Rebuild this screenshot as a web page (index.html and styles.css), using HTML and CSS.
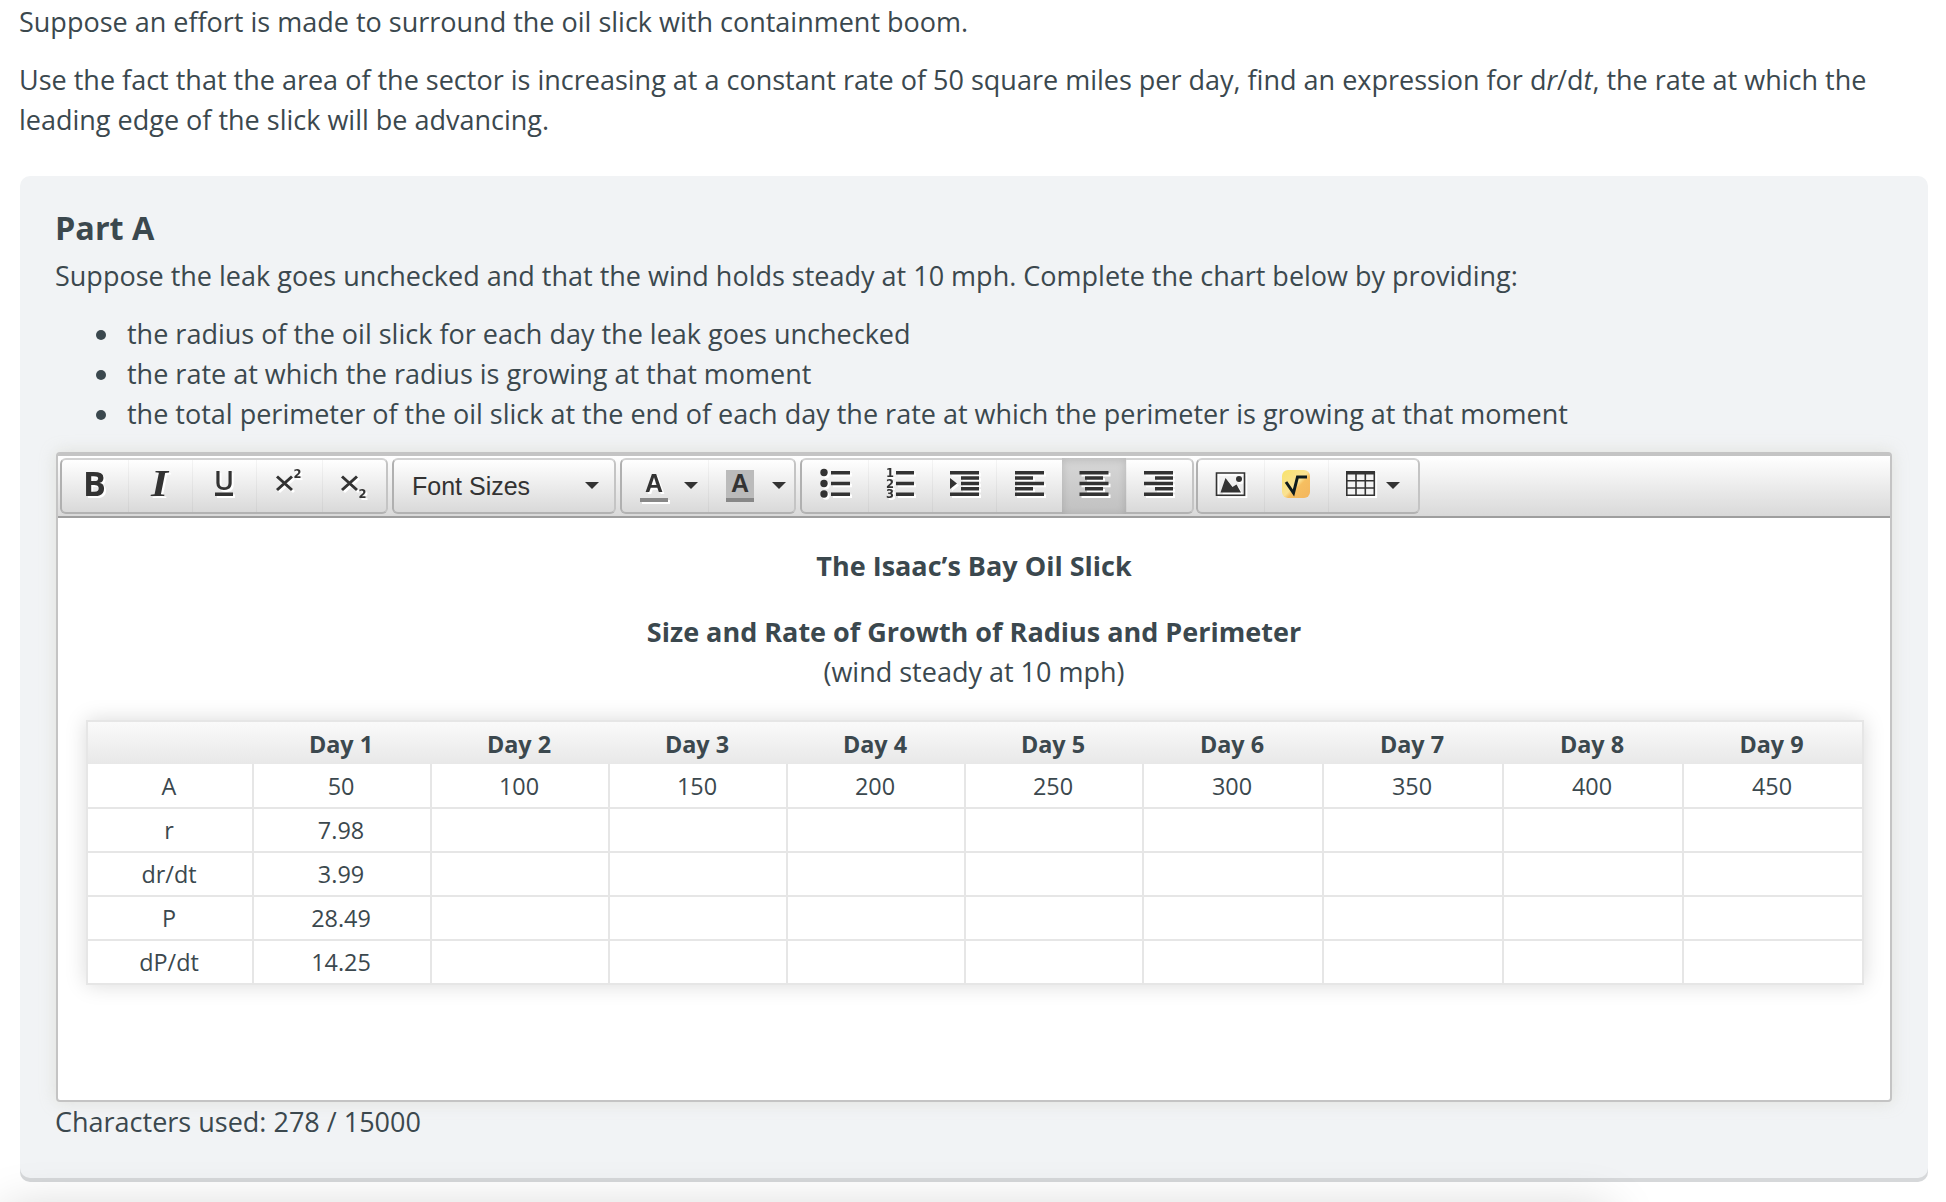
FILE: index.html
```html
<!DOCTYPE html>
<html lang="en">
<head>
    <meta charset="UTF-8">
    <title>Oil Slick - Part A</title>
    <link rel="stylesheet" href="styles.css">
</head>
<body>
    <div class="intro">
        <p>Suppose an effort is made to surround the oil slick with containment boom.</p>
        <p>Use the fact that the area of the sector is increasing at a constant rate of 50 square miles per day, find an expression for d<i>r</i>/d<i>t</i>, the rate at which the leading edge of the slick will be advancing.</p>
    </div>

    <div class="panel">
        <h2>Part A</h2>
        <p>Suppose the leak goes unchecked and that the wind holds steady at 10 mph. Complete the chart below by providing:</p>
        <ul>
            <li>the radius of the oil slick for each day the leak goes unchecked</li>
            <li>the rate at which the radius is growing at that moment</li>
            <li>the total perimeter of the oil slick at the end of each day the rate at which the perimeter is growing at that moment</li>
        </ul>

        <div class="editor">
            <div class="toolbar">
                <div class="group">
                    <div class="btn wide"><svg class="icon" viewBox="0 0 28 28"><text class="bold" x="2" y="26">B</text></svg></div>
                    <div class="btn"><svg class="icon" viewBox="0 0 28 28"><text class="italic" x="5" y="26" textLength="17" lengthAdjust="spacingAndGlyphs">I</text></svg></div>
                    <div class="btn"><svg class="icon" viewBox="0 0 28 28"><text class="under" x="14" y="20">U</text><path d="M5 22.500h18v3.500h-18z"/></svg></div>
                    <div class="btn wide"><svg class="icon" viewBox="0 0 28 28"><path class="line" d="M2 6.500L17 20M17 6.500L2 20"/><text class="tiny" x="18.500" y="8">2</text></svg></div>
                    <div class="btn"><svg class="icon" viewBox="0 0 28 28"><path class="line" d="M2 6.500L17 20M17 6.500L2 20"/><text class="tiny" x="18.500" y="28">2</text></svg></div>
                </div>
                <div class="group">
                    <div class="btn sizes"><span>Font Sizes</span><span class="caret"></span></div>
                </div>
                <div class="group">
                    <div class="btn color first"><svg class="icon" viewBox="0 0 28 28"><text class="letter" x="14" y="22">A</text><path class="swatch" d="M0 28h28v4H0z"/></svg><span class="caret"></span></div>
                    <div class="btn color"><svg class="icon flat" viewBox="0 0 28 28"><path class="mark" d="M0 0h28v28H0z"/><text class="letter" x="14" y="22">A</text><path class="swatch" d="M0 28h28v4H0z"/></svg><span class="caret"></span></div>
                </div>
                <div class="group">
                    <div class="btn wide"><svg class="icon" viewBox="0 0 28 28"><circle cx="3" cy="2.500" r="3.700"/><circle cx="3" cy="13.500" r="3.700"/><circle cx="3" cy="24" r="3.700"/><path d="M10 1h19v3.500H10zM10 11.700h19v3.500H10zM10 22.500h19v3.500H10z"/></svg></div>
                    <div class="btn"><svg class="icon" viewBox="0 0 28 28"><text class="tiny" x="0" y="7">1</text><text class="tiny" x="0" y="17.500">2</text><text class="tiny" x="0" y="28">3</text><path d="M10 1h18v3.500H10zM10 11.700h18v3.500H10zM10 22.500h18v3.500H10z"/></svg></div>
                    <div class="btn"><svg class="icon" viewBox="0 0 28 28"><path d="M0 1h29v3.500H0zM11 6.200h18v3.500H11zM11 11.700h18v3.500H11zM11 17h18v3.500H11zM0 22.500h29v3.500H0zM0 8l7 5.500L0 19z"/></svg></div>
                    <div class="btn wide"><svg class="icon" viewBox="0 0 28 28"><path d="M0 1h29v3.500H0zM0 6.200h18v3.500H0zM0 11.700h29v3.500H0zM0 17h18v3.500H0zM0 22.500h29v3.500H0z"/></svg></div>
                    <div class="btn active"><svg class="icon" viewBox="0 0 28 28"><path d="M-.5 1h29v3.500h-29zM5 6.200h18v3.500H5zM-.5 11.700h29v3.500h-29zM5 17h18v3.500H5zM-.5 22.500h29v3.500h-29z"/></svg></div>
                    <div class="btn wide"><svg class="icon" viewBox="0 0 28 28"><path d="M-1 1h29v3.500H-1zM10 6.200h18v3.500H10zM-1 11.700h29v3.500H-1zM10 17h18v3.500H10zM-1 22.500h29v3.500H-1z"/></svg></div>
                </div>
                <div class="group">
                    <div class="btn wide"><svg class="icon" viewBox="0 0 28 28"><path class="frame" d="M-.5 3h28v22.200h-28z"/><path d="M3.500 22.500L8.500 8l7 9 4-2.500 4.500 8z"/><circle cx="22" cy="9" r="3"/></svg></div>
                    <div class="btn"><svg class="icon flat" viewBox="0 0 28 28">
                        <defs>
                            <linearGradient id="gold" x1="0" y1="0" x2="1" y2="1">
                                <stop offset="0" stop-color="#f8e36c"/>
                                <stop offset=".5" stop-color="#fae293"/>
                                <stop offset=".6" stop-color="#f6bf60"/>
                                <stop offset="1" stop-color="#f3b55e"/>
                            </linearGradient>
                        </defs>
                        <rect width="28" height="28" rx="6" fill="url(#gold)"/>
                        <path class="root" d="M4 12l7.500 11L15.500 7H25"/>
                    </svg></div>
                    <div class="btn table-btn"><svg class="icon" viewBox="0 0 28 28"><path class="sheet" d="M0 1h29v25H0z"/><path d="M0 1h29v3.500H0z"/><path class="grid" d="M.8 2v23.200h27.500V2M10 3v22M19.300 3v22M0 10.800h29M0 18h29"/></svg><span class="caret"></span></div>
                </div>
            </div>

            <div class="content">
                <p><b>The Isaac’s Bay Oil Slick</b></p>
                <p class="subtitle"><b>Size and Rate of Growth of Radius and Perimeter</b><br>(wind steady at 10 mph)</p>
                <table>
                    <colgroup>
                        <col class="col-label">
                        <col span="5" class="col-day">
                        <col span="4" class="col-day-wide">
                    </colgroup>
                    <tr><th></th><th>Day 1</th><th>Day 2</th><th>Day 3</th><th>Day 4</th><th>Day 5</th><th>Day 6</th><th>Day 7</th><th>Day 8</th><th>Day 9</th></tr>
                    <tr><td>A</td><td>50</td><td>100</td><td>150</td><td>200</td><td>250</td><td>300</td><td>350</td><td>400</td><td>450</td></tr>
                    <tr><td>r</td><td>7.98</td><td></td><td></td><td></td><td></td><td></td><td></td><td></td><td></td></tr>
                    <tr><td>dr/dt</td><td>3.99</td><td></td><td></td><td></td><td></td><td></td><td></td><td></td><td></td></tr>
                    <tr><td>P</td><td>28.49</td><td></td><td></td><td></td><td></td><td></td><td></td><td></td><td></td></tr>
                    <tr><td>dP/dt</td><td>14.25</td><td></td><td></td><td></td><td></td><td></td><td></td><td></td><td></td></tr>
                </table>
            </div>
        </div>
        <div class="counter">Characters used: 278 / 15000</div>
    </div>

    <div class="footer-shade"></div>
</body>
</html>
```

FILE: styles.css
```css
* {
    box-sizing: border-box;
}
body {
    margin: 0;
    padding: 2px 18px 0 19px;
    height: 1202px;
    overflow: hidden;
    background: #fff;
    color: #3b484e;
    font-family: "Open Sans", "Noto Sans", sans-serif;
    font-size: 27px;
    line-height: 40px;
}
p {
    margin: 0 0 18px;
}
.intro {
    height: 174px;
}
.panel {
    margin-left: 1px;
    height: 1002px;
    padding: 32px 36px 0 35px;
    background: #f1f3f5;
    border-radius: 10px;
    box-shadow: 0 4px 0 #d6d8da;
}
.panel h2 {
    margin: 0;
    font-size: 32.4px;
    line-height: 39px;
    height: 48px;
}
.panel ul {
    margin: 0;
    padding: 0 0 0 72px;
    height: 138px;
    list-style: none;
}
.panel li::before {
    content: "";
    display: inline-block;
    width: 10px;
    height: 10px;
    margin: 0 21px 4px -31px;
    border-radius: 50%;
    background: #3b484e;
}

/* editor */
.editor {
    margin-left: 1px;
    height: 650px;
    border: 2px solid #c4c4c4;
    border-top-width: 4px;
    border-radius: 4px;
    background: #fff;
    box-shadow: 0 0 16px rgba(190, 190, 170, 0.35);
}
.toolbar {
    display: flex;
    gap: 4px;
    height: 62px;
    padding: 2px 2px 0;
    border-bottom: 2px solid #9e9e9e;
    background: linear-gradient(#fff, #d9d9d9);
}
.group {
    display: flex;
    height: 56px;
    border: 2px solid #c0c0c0;
    border-color: #d2d2d2 #c4c4c4 #b2b2b2 #b0b0b0;
    border-radius: 6px;
    background: linear-gradient(#fff, #d9d9d9);
}
.group:last-child {
    margin-left: -2px;
}
.btn {
    display: flex;
    justify-content: center;
    width: 64px;
    padding-top: 10px;
}
.btn + .btn {
    box-shadow: inset 1px 0 0 rgba(0, 0, 0, 0.04);
}
.btn.wide {
    width: 66px;
}
.btn.active {
    margin: -2px 0;
    padding-top: 12px;
    background: linear-gradient(#d8d8d8, #c0c0c0);
    box-shadow: inset 0 2px 8px rgba(0, 0, 0, 0.15);
}
.btn.sizes,
.btn.color,
.btn.table-btn {
    justify-content: space-between;
    padding-left: 18px;
    padding-right: 8px;
}
.btn.sizes {
    width: 220px;
    padding-right: 15px;
    color: #333;
    font-family: "Liberation Sans", Arial, sans-serif;
    font-size: 25px;
    line-height: 32px;
}
.btn.color {
    width: 86px;
}
.btn.color.first {
    padding-right: 10px;
}
.btn.table-btn {
    width: 90px;
    padding-right: 18px;
}
.caret {
    width: 0;
    height: 0;
    margin-top: 12px;
    border: 7px solid transparent;
    border-top-color: #333;
    border-bottom: 0;
}

/* toolbar icons */
.icon {
    width: 28px;
    height: 28px;
    overflow: visible;
    fill: #333;
    filter: drop-shadow(2px 2px 0 #fff);
}
.icon.flat {
    filter: none;
}
.icon text {
    font-family: "Open Sans", sans-serif;
}
.icon .bold {
    font-size: 34px;
    font-weight: 700;
}
.icon .italic {
    font: italic 700 37px "Liberation Serif", serif;
}
.icon .under {
    font-size: 27px;
    font-weight: 600;
    text-anchor: middle;
}
.icon .letter {
    font: 700 25px "Liberation Sans", sans-serif;
    text-anchor: middle;
}
.icon .tiny {
    font: 700 11.500px "DejaVu Sans", sans-serif;
}
.line,
.frame,
.grid,
.root {
    fill: none;
    stroke: #333;
    stroke-width: 3;
}
.frame,
.grid {
    stroke-width: 1.600;
}
.root {
    stroke: #0e1b1d;
}
.sheet {
    fill: #f4f4f4;
}
.mark {
    fill: #bbb;
}
.swatch {
    fill: #888;
}

/* editor content */
.content {
    padding: 28px 28px 0;
    text-align: center;
}
.content p {
    margin-bottom: 26px;
}
.content .subtitle {
    margin-bottom: 28px;
}
table {
    width: 1778px;
    table-layout: fixed;
    border-collapse: collapse;
    border: 2px solid #e6e6e6;
    box-shadow: 0 0 20px rgba(0, 0, 0, 0.15);
    font-size: 23.4px;
    line-height: 34px;
}
.col-label {
    width: 166px;
}
.col-day {
    width: 178px;
}
.col-day-wide {
    width: 180px;
}
td,
th {
    padding: 0 2px 0 0;
    height: 44px;
}
td {
    border: 2px solid #e6e6e6;
    background: #fff;
}
th {
    height: 43px;
    padding-top: 1px;
    background: linear-gradient(#fafafa, #e8e8e8);
}
tr:nth-child(2) td {
    border-top: 0;
}
.counter {
    margin-top: 0;
}

.footer-shade {
    position: fixed;
    top: 1210px;
    left: 5px;
    width: 1605px;
    height: 100px;
    box-shadow: 0 0 50px rgba(0, 0, 0, 0.18);
}
```
